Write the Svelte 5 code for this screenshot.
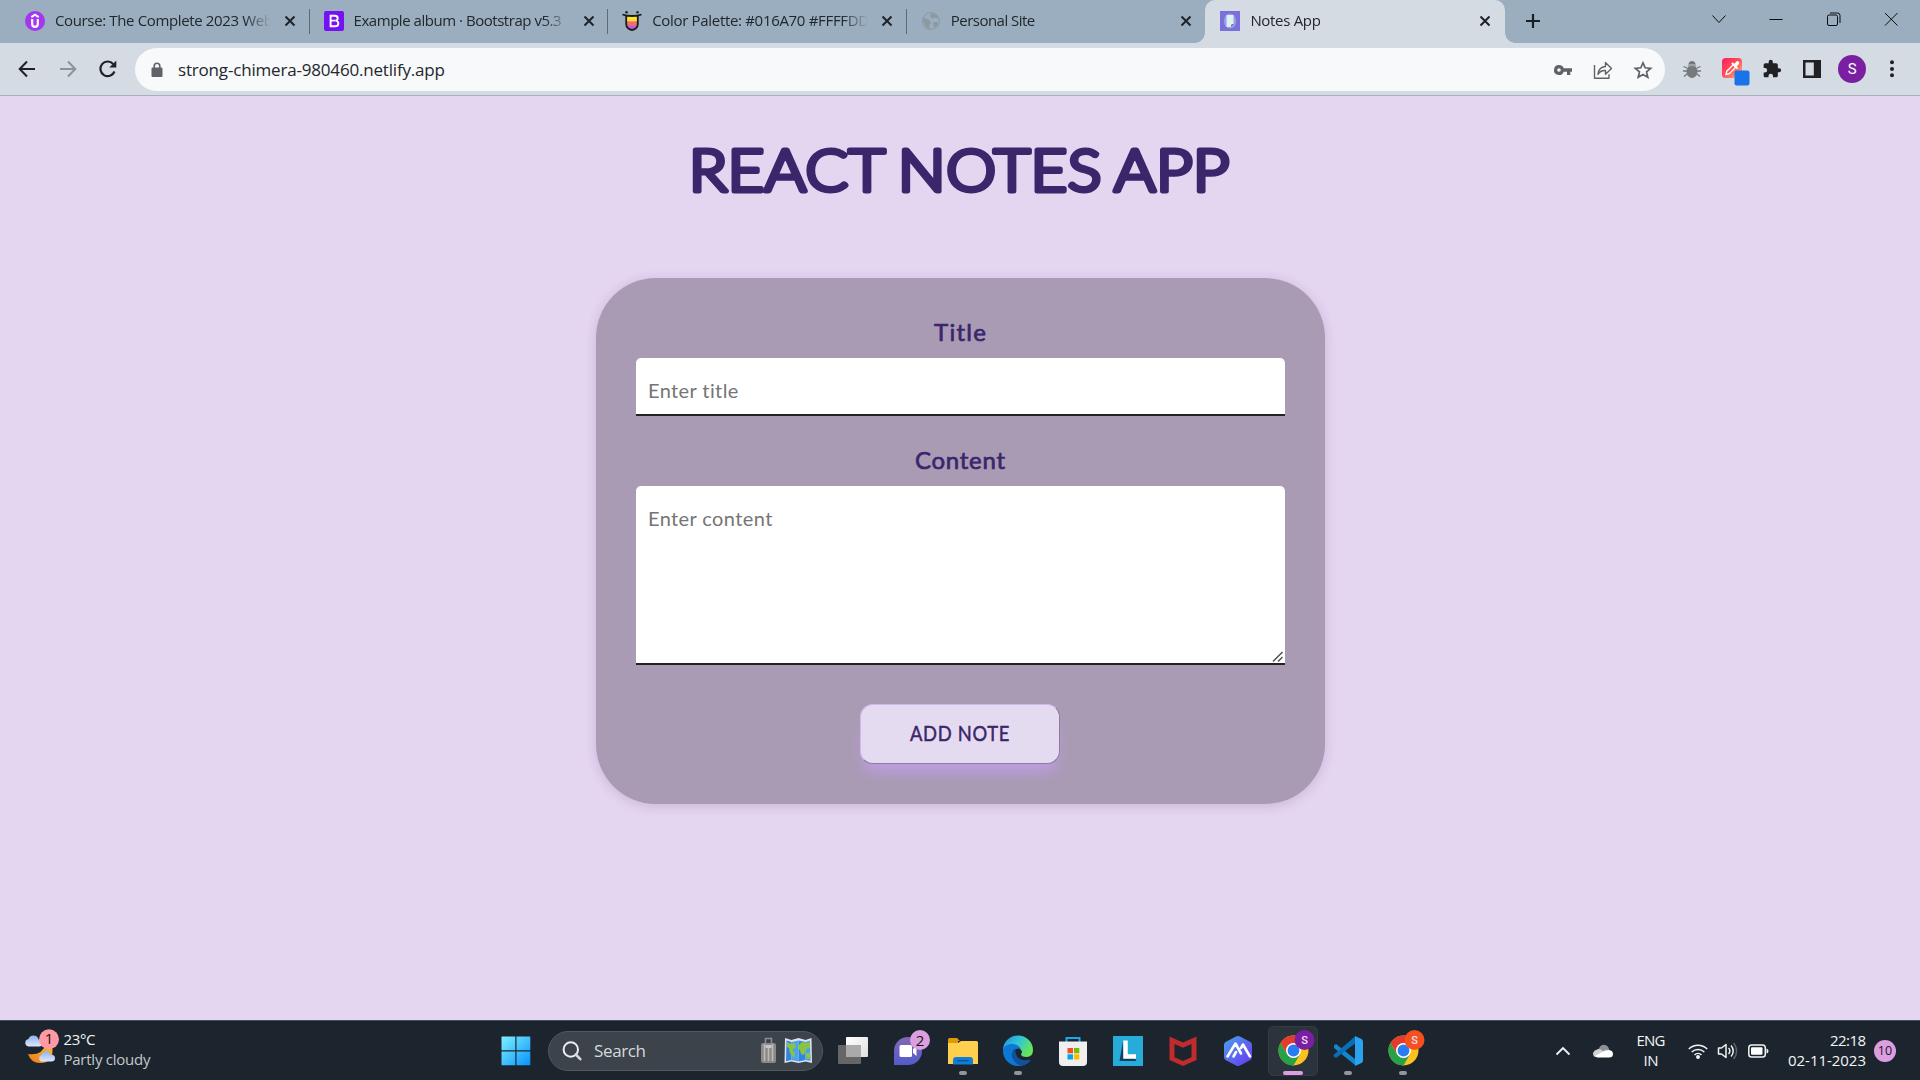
<script>
  const tabs = [
    { icon: 'udemy', title: 'Course: The Complete 2023 Web', width: 218 },
    { icon: 'bootstrap', title: 'Example album · Bootstrap v5.3', width: 208 },
    { icon: 'palette', title: 'Color Palette: #016A70 #FFFFDD', width: 217 },
    { icon: 'globe', title: 'Personal Site', width: 84.5 },
    { icon: 'notes', title: 'Notes App', width: 70.5, active: true },
  ];

  // Tracks the letters so that a label takes the given width.
  function fit(node, width) {
    const gap = (width - node.getBoundingClientRect().width) / (node.textContent.length - 1);
    node.style.letterSpacing = `${gap}px`;
    node.style.marginRight = `${-gap}px`;
  }
</script>

{#snippet chrome(color)}
  <svg class="chrome" width="42" height="42" viewBox="0 0 42 42">
    <circle cx="20.5" cy="20.5" r="15" fill="#fcc31e" />
    <path d="M20.5 13H33.5A15 15 0 0 0 7.5 13L14 24.3Z" fill="#e33b2e" />
    <path d="M7.5 13A15 15 0 0 0 20.5 35.5L27 24.2 20.5 27 14 24.2Z" fill="#27a04a" />
    <circle cx="20.5" cy="20.5" r="7.5" fill="#fff" />
    <circle cx="20.5" cy="20.5" r="5.9" fill="#2b7bf0" />
    <circle cx="31.5" cy="10" r="10" fill={color} />
    <text x="31.5" y="14" text-anchor="middle" class="chrome-letter">S</text>
  </svg>
{/snippet}

<div class="screen">
  <header class="tabstrip">
    {#each tabs as tab, i}
      <div class="tab" class:active={tab.active} class:divided={i < 3}>
        <svg class="favicon" width="20" height="20" viewBox="0 0 20 20">
          {#if tab.icon === 'udemy'}
            <circle cx="10" cy="10" r="10" fill="#a435f0" />
            <path d="M6.3 6.2 10 3.7l3.7 2.5" fill="none" stroke="#fff" stroke-width="2" />
            <path d="M7.2 8v5a2.8 2.8 0 0 0 5.6 0V8" fill="none" stroke="#fff" stroke-width="2.2" />
          {:else if tab.icon === 'bootstrap'}
            <rect width="20" height="20" rx="2" fill="#7512f5" />
            <path d="M6.6 4.7h4.3q2.8 0 2.8 2.5 0 2-2 2.4 2.6.3 2.6 2.8 0 2.9-3.4 2.9H6.6Z" fill="none" stroke="#fff" stroke-width="1.9" />
            <path d="M6.6 9.6h5" stroke="#fff" stroke-width="1.7" />
          {:else if tab.icon === 'palette'}
            <path d="M4.5 5.5h11v5h-11z" fill="#ffe32b" />
            <path d="M4.5 10.5h11v4h-11z" fill="#ff6a5e" />
            <path d="M5 14.5h10q-1 4-5 4t-5-4" fill="#c05bd8" />
            <path d="M.5 3.5Q4 5 10 5t9.5-1.5M4.2 5v8a5.8 6 0 0 0 11.6 0V5" fill="none" stroke="#1b1b1b" stroke-width="1.8" />
            <circle cx="4.5" cy="1.3" r="1.2" fill="#1b1b1b" /><circle cx="15.5" cy="1.3" r="1.2" fill="#1b1b1b" />
          {:else if tab.icon === 'globe'}
            <circle cx="10" cy="10" r="8.5" fill="none" stroke="#8e989f" stroke-width="1" />
            <path d="M2 7q5 0 7 3t-1 4l1 4Q2 16 2 7M10 2.5q-2 4 1 5l3-1 3.5 1Q16 2.5 10 2.5M12 11l4 0 1.500 1.500Q16 16 13 17Z" fill="#8e989f" />
          {:else}
            <rect width="20" height="20" fill="#7b6fdb" />
            <ellipse cx="10" cy="10" rx="6.200" ry="7.500" fill="#9a9be6" />
            <path d="M6.500 4h7v9l-2.500 3H6.500Z" fill="#dcf1f0" />
            <path d="m11 16 .5-2.500 2-.5Z" fill="#3b3191" />
          {/if}
        </svg>
        <span class="tab-title"><span class="run" use:fit={tab.width}>{tab.title}</span></span>
        <svg class="close" width="12" height="12" viewBox="0 0 12 12"><path d="m1.500 1.500 9 9m0-9-9 9" stroke="#1f2328" stroke-width="2" /></svg>
      </div>
    {/each}
    <div class="new-tab">
      <svg width="16" height="16" viewBox="0 0 16 16"><path d="M8 1v14M1 8h14" stroke="#1b1e22" stroke-width="2.200" /></svg>
    </div>
    <div class="window-buttons">
      <svg width="16" height="16" viewBox="0 0 16 16"><path d="m1.500 4.500 6.500 7 6.500-7" /></svg>
      <svg width="16" height="16" viewBox="0 0 16 16"><path d="M1.500 8.500h13" /></svg>
      <svg width="16" height="16" viewBox="0 0 16 16"><rect x="1.500" y="4" width="10" height="10.500" rx="1.500" /><path d="M4 2h7.500Q14 2 14 4.500V12" /></svg>
      <svg width="16" height="16" viewBox="0 0 16 16"><path d="m2 2 12.500 12.500m0-12.500L2 14.500" /></svg>
    </div>
  </header>

  <nav class="toolbar">
    <div class="nav-buttons">
      <svg width="20" height="20" viewBox="0 0 20 20"><path d="M18 10H3M10 2.500 2.700 10l7.300 7.500" fill="none" stroke="#202124" stroke-width="2" /></svg>
      <svg width="20" height="20" viewBox="0 0 20 20"><path d="M2 10h15M10 2.500l7.300 7.500-7.300 7.500" fill="none" stroke="#8c9299" stroke-width="2" /></svg>
      <svg width="20" height="20" viewBox="0 0 20 20"><path d="M16.500 12.500A7.300 7.300 0 1 1 15.200 5" fill="none" stroke="#202124" stroke-width="2.200" /><path d="M18.300 1.500v7h-7Z" fill="#202124" /></svg>
    </div>
    <div class="omnibox">
      <svg class="lock" width="12" height="16" viewBox="0 0 12 16"><rect x=".5" y="5.500" width="11" height="9.500" rx="1.300" fill="#5f6368" /><path d="M3.200 6V4a2.800 2.800 0 0 1 5.600 0v2" fill="none" stroke="#5f6368" stroke-width="1.600" /></svg>
      <span class="url"><span class="run" use:fit={267}>strong-chimera-980460.netlify.app</span></span>
      <div class="omni-icons">
        <svg width="20" height="20" viewBox="0 0 20 20"><path d="M6 5a5 5 0 1 0 4.700 6.700H14V15h3.300v-3.300H19V8.300h-8.300A5 5 0 0 0 6 5m0 3.200a1.800 1.800 0 1 1 0 3.600 1.800 1.800 0 0 1 0-3.600" fill="#5f6368" /></svg>
        <svg width="20" height="20" viewBox="0 0 20 20"><path d="M1.500 5v13.200H16v-4M5 14.500Q5.500 7 12.500 6.500V2.500l6 6-6 5.700v-3.700Q7.500 10 5 14.500Z" fill="none" stroke="#5f6368" stroke-width="1.400" stroke-linejoin="round" /></svg>
        <svg width="20" height="20" viewBox="0 0 20 20"><path d="m10 2.800 2.200 5 5.500.5-4.200 3.600 1.300 5.400L10 14.400l-4.800 2.900 1.300-5.400-4.200-3.600 5.500-.5Z" fill="none" stroke="#5f6368" stroke-width="1.700" /></svg>
      </div>
    </div>
    <div class="extensions">
      <svg width="20" height="20" viewBox="0 0 20 20">
        <path d="M5 9 1.500 7.500M5 12H1m4 3-3 2.500M15 9l3.500-1.500M15 12h4m-4 3 3 2.500" stroke="#777" stroke-width="1.300" />
        <ellipse cx="10" cy="12.500" rx="5.600" ry="6.500" fill="#777a7c" /><path d="M5.500 7.200a4.700 5.500 0 0 1 9 0Z" fill="#a0a3a5" /><path d="M6.500 5a3.600 4 0 0 1 7 0Z" fill="#777" />
      </svg>
      <svg width="30" height="30" viewBox="0 0 30 30">
        <defs><linearGradient id="pick" x1="0" y1="0" x2="1" y2="1"><stop offset="0" stop-color="#fb1f62" /><stop offset=".5" stop-color="#ff5058" /><stop offset="1" stop-color="#ffc27a" /></linearGradient></defs>
        <rect x="5" y="4" width="20" height="20" rx="3.500" fill="url(#pick)" />
        <path d="m9 20.500.8-3.300 6.400-6.400 2.500 2.500-6.400 6.400Z" fill="none" stroke="#fff" stroke-width="1.300" />
        <path d="m15.500 9.500 4.500 4.500" stroke="#fff" stroke-width="1.800" stroke-linecap="round" />
        <path d="m18.500 11 2-2" stroke="#fff" stroke-width="3.600" stroke-linecap="round" />
        <rect x="17.500" y="16.500" width="15" height="15" rx="2" fill="#1a73e8" />
      </svg>
      <svg width="20" height="20" viewBox="0 0 24 24"><path d="M20.500 11H19V7a2 2 0 0 0-2-2h-4V3.500a2.500 2.500 0 0 0-5 0V5H4a2 2 0 0 0-2 2v3.800h1.500a2.700 2.700 0 0 1 0 5.400H2V20c0 1.100.9 2 2 2h3.800v-1.500a2.700 2.700 0 0 1 5.400 0V22H17a2 2 0 0 0 2-2v-4h1.500a2.500 2.500 0 0 0 0-5" fill="#202124" /></svg>
      <svg width="20" height="20" viewBox="0 0 20 20"><path d="M1 1h18v18H1Z" fill="#202124" /><path d="M3.500 3.500h8.300v13H3.500Z" fill="#d4dbe3" /></svg>
      <span class="avatar">S</span>
      <svg width="20" height="20" viewBox="0 0 20 20" fill="#202124"><circle cx="10" cy="3.300" r="2" /><circle cx="10" cy="10" r="2" /><circle cx="10" cy="16.300" r="2" /></svg>
    </div>
  </nav>

  <main class="page">
    <h1>
      <svg width="540" height="64" viewBox="0 0 540 64"><text x="-1" y="52.500" textLength="541" lengthAdjust="spacingAndGlyphs" class="heading">REACT NOTES APP</text></svg>
    </h1>
    <form class="card">
      <label for="title"><span class="run" use:fit={52}>Title</span></label>
      <input id="title" placeholder="Enter title" />
      <label for="content" class="second"><span class="run" use:fit={90}>Content</span></label>
      <div class="area">
        <textarea id="content" placeholder="Enter content"></textarea>
        <svg class="grip" width="12" height="12" viewBox="0 0 12 12"><path d="M1 10.500 10.500 1M6 10.500 10.500 6" stroke="#4a4a4a" stroke-width="1.400" /></svg>
      </div>
      <button type="button">
        <svg width="101" height="30" viewBox="0 0 101 30"><text x="1" y="22.300" textLength="100" lengthAdjust="spacingAndGlyphs" class="add">ADD NOTE</text></svg>
      </button>
    </form>
  </main>

  <footer class="taskbar">
    <div class="weather">
      <svg width="36" height="38" viewBox="0 0 36 38">
        <defs>
          <linearGradient id="cloud" x1="0" y1="0" x2="0" y2="1"><stop offset="0" stop-color="#8fb2ee" /><stop offset="1" stop-color="#dbe8fb" /></linearGradient>
          <linearGradient id="moon" x1="1" y1="0" x2="0" y2="1"><stop offset="0" stop-color="#f9bd2d" /><stop offset="1" stop-color="#ee7a1c" /></linearGradient>
        </defs>
        <path d="M29 18q3 17-12 17-9 0-12-9 14 2 18-10Z" fill="url(#moon)" />
        <path d="M5.500 18.500a3.800 3.800 0 0 1 0-7.500Q6.500 7.500 10.500 7.500q4 0 5 4 4 0 4 3.500t-3.500 3.500Z" fill="url(#cloud)" />
        <path d="M18 33.500a3.500 3.500 0 0 1 .5-6.500q1.500-4 4.500-4t4.500 3.500q4.500 0 4.500 3.500t-3.500 3.500Z" fill="url(#cloud)" />
        <circle cx="26" cy="11.200" r="10" fill="#ff99a4" />
        <text x="26" y="16.200" text-anchor="middle" class="badge-text">1</text>
      </svg>
      <div class="lines">
        <span><span class="run" use:fit={32}>23°C</span></span>
        <span class="dim"><span class="run" use:fit={87}>Partly cloudy</span></span>
      </div>
    </div>

    <div class="apps">
      <div class="cell">
        <svg class="start" width="30" height="30" viewBox="0 0 30 30">
          <defs><linearGradient id="win" gradientUnits="userSpaceOnUse" x1="0" y1="0" x2="29" y2="29"><stop offset="0" stop-color="#7ff3ff" /><stop offset="1" stop-color="#0a93fb" /></linearGradient></defs>
          <path d="M1 .5h13.300v13.800H.5V1ZM15.500.5h13.300l.5.5v13.300H15.500ZM.5 15.500h13.800v13.800H1l-.5-.5ZM15.500 15.500h13.800v13.300l-.5.500H15.500Z" fill="url(#win)" />
        </svg>
      </div>
      <div class="search">
        <svg width="20" height="20" viewBox="0 0 20 20"><circle cx="8.800" cy="8.500" r="7.200" fill="none" stroke="#eceef0" stroke-width="2" /><path d="m13.800 13.500 4.500 4.700" stroke="#d5d7da" stroke-width="2.600" stroke-linecap="round" /></svg>
        <span class="search-text"><span class="run" use:fit={52}>Search</span></span>
        <svg width="52" height="28" viewBox="0 0 52 28">
          <path d="M5.500 7V1.500h6V7" fill="none" stroke="#858b9b" stroke-width="1.600" />
          <rect x="1" y="6" width="15" height="20" rx="2" fill="#8b8987" />
          <path d="M4.500 7v17M8.500 10v14M12.500 7v17" stroke="#bdbbb8" stroke-width="1.600" />
          <path d="M5.500 8h6v3h-6Z" fill="#c9c6cb" />
          <path d="m25 1 6.500 2 7-2 7 2 6-2 .5 25-6.500-1.500-7 1.500-7-1.500-7 1.500Z" fill="#e4e1ee" />
          <path d="m26.500 3.500 5 1.500v18l-5.500 1.200ZM38.500 3.500l7 1.500v18l-7 1.500Z" fill="#2e86e0" />
          <path d="m31.500 5 7-1.500v21l-7-1.500ZM45.500 5l4.500-1.500.5 20.500-5-1Z" fill="#4ba3ec" />
          <path d="m27 5 4 2 4-1 1 4-4 3 3 3-1 5-4-5-1-5-2-1ZM38 9l4-4 5 1 3-1v6l-4 1-2 6-3-1-1-4-2-1ZM46 16h4l.5 5-4 1Z" fill="#8bc53f" />
        </svg>
      </div>
      <div class="cell">
        <svg width="32" height="30" viewBox="0 0 32 30">
          <defs><linearGradient id="sheet" x1="0" y1="0" x2="1" y2="1"><stop offset="0" stop-color="#fff" /><stop offset="1" stop-color="#dedede" /></linearGradient></defs>
          <rect x="9" y="1" width="22" height="20" rx="1" fill="url(#sheet)" /><rect x="1" y="9" width="23" height="19" rx="1" fill="#666" /><path d="M9 9h15v12H9Z" fill="#aaa" />
        </svg>
      </div>
      <div class="cell">
        <svg class="raised" width="38" height="38" viewBox="0 0 38 38">
          <defs><linearGradient id="chat" x1="0" y1="0" x2="0" y2="1"><stop offset="0" stop-color="#8565b5" /><stop offset="1" stop-color="#525ccd" /></linearGradient></defs>
          <path d="M3 36V22A14 14 0 1 1 17 36Z" fill="url(#chat)" />
          <rect x="8.500" y="16" width="12.500" height="12" rx="1.500" fill="#fff" /><path d="m22 20 3.500-3v10L22 24Z" fill="#fff" />
          <circle cx="29" cy="11" r="10" fill="#db9fe0" />
          <text x="29" y="16.500" text-anchor="middle" class="badge-text">2</text>
        </svg>
      </div>
      <div class="cell running">
        <svg width="32" height="30" viewBox="0 0 32 30">
          <path d="M1 3.500q0-1.500 1.500-1.500H10l3 3h-2v6H1Z" fill="#dd9b0a" /><path d="M1 7h10l3-2h15.500q1.500 0 1.500 1.500V28H1Z" fill="#ffcf4d" />
          <path d="M6 28.500V24q0-3 3-3h14q3 0 3 3v4.500Z" fill="#117fd5" /><path d="M10 24.700h12" stroke="#07569c" stroke-width="1.500" />
        </svg>
      </div>
      <div class="cell running">
        <svg width="30" height="30" viewBox="0 0 30 30">
          <defs><linearGradient id="wave" x1="0" y1="0" x2="1" y2=".5"><stop offset="0" stop-color="#1b8fdc" /><stop offset=".5" stop-color="#31c2dc" /><stop offset="1" stop-color="#65e65a" /></linearGradient></defs>
          <path d="M0 14A15 14.500 0 0 1 30 14q0 7-6.500 7-5.500 0-5.500-3 2-2 0-4-3-5-9-4.500Q3 10 0 14" fill="url(#wave)" />
          <path d="M0 14q1-5 8-6 7-.5 10 5-5-2-7 3-2 9 6 11 5 1 11-3-5 6-13 6A15 15 0 0 1 0 14" fill="#0c78d4" />
          <path d="M12 12q-6 6-1.500 12 3 5 8 5.500 6-1 9-6-15 4-15.500-11.500" fill="#11509c" />
        </svg>
      </div>
      <div class="cell">
        <svg width="30" height="30" viewBox="0 0 30 30">
          <path d="M8.500 7V2h13v5" fill="none" stroke="#18a9ea" stroke-width="2" /><path d="M1 5.500h28V26q0 4-4 4H5q-4 0-4-4Z" fill="#efefef" />
          <path d="M9.500 12H15v5.300H9.500Z" fill="#f25022" /><path d="M16 12h5.300v5.300H16Z" fill="#7fba00" /><path d="M9.500 18.300H15v5.200H9.500Z" fill="#00a4ef" /><path d="M16 18.300h5.300v5.200H16Z" fill="#ffb900" />
        </svg>
      </div>
      <div class="cell">
        <svg width="30" height="30" viewBox="0 0 30 30"><path d="M0 0h30v30H0Z" fill="#27acd9" /><path d="m10 5-3.500 20h17l-1.500-3H11Z" fill="#123f66" /><path d="M12.500 4.500v16H23" fill="none" stroke="#fff" stroke-width="4.500" /></svg>
      </div>
      <div class="cell">
        <svg width="28" height="30" viewBox="0 0 28 30"><path fill-rule="evenodd" d="m.5.500 13.500 6 13.500-6V24L14 30 .5 24ZM5.500 8v13.300L14 25l8.500-3.700V8L14 11.800Z" fill="#c02b2b" /></svg>
      </div>
      <div class="cell">
        <svg width="28" height="30" viewBox="0 0 28 30">
          <defs><linearGradient id="hex" x1="0" y1="0" x2="1" y2="1"><stop offset="0" stop-color="#4aa3ec" /><stop offset="1" stop-color="#6a34f0" /></linearGradient></defs>
          <path d="M12 .6q2-1 4 0l10 5.200q2 1 2 3v12.400q0 2-2 3l-10 5.200q-2 1-4 0L2 24.200q-2-1-2-3V8.800q0-2 2-3Z" fill="url(#hex)" />
          <path d="M3.500 20.500 11.500 7.500 17 17.500M9.500 20.500l2.500-4.500M17 12l2-3.500L26 20.500" fill="none" stroke="#fff" stroke-width="2.600" stroke-linecap="round" stroke-linejoin="round" />
        </svg>
      </div>
      <div class="cell running current">{@render chrome('#7b1fa2')}</div>
      <div class="cell running">
        <svg width="30" height="30" viewBox="0 0 30 30"><path d="m1 9.500 2-1.500 19 15v6L1 12Z" fill="#1585cf" /><path d="M22 .5v7L3 22l-2-1.500q-1-1 0-2Z" fill="#0a6eb5" /><path d="m22 0 6.500 3q1.500 1 1.500 2.500v19q0 1.500-1.500 2.500L22 30Z" fill="#2ba2ee" /></svg>
      </div>
      <div class="cell running">{@render chrome('#f4511e')}</div>
    </div>

    <div class="tray">
      <svg width="16" height="10" viewBox="0 0 16 10"><path d="m1.500 8.500 6.500-6.500 6.500 6.500" fill="none" stroke="#f2f3f4" stroke-width="1.800" /></svg>
      <svg width="22" height="14" viewBox="0 0 22 14"><path d="M4 9Q5 5 7 4.500 9 0 13 1q3 .5 4 4l1 5Z" fill="#8d9297" /><path d="M1 9q1-3 4-3.500l3-.5 7 5-3 3H4Q1 13 1 9" fill="#cfd2d4" /><path d="m3 12 10-5.500 4-.5q4 .5 4 4t-4 3.500H5Z" fill="#fff" /></svg>
      <div class="lines centered"><span><span class="run" use:fit={29}>ENG</span></span><span><span class="run" use:fit={15}>IN</span></span></div>
      <svg width="20" height="16" viewBox="0 0 20 16" fill="none" stroke="#f2f3f4" stroke-width="1.500"><path d="M.8 6a13 13 0 0 1 18.400 0M3.700 9a9 9 0 0 1 12.600 0M6.500 12a5 5 0 0 1 7 0" /><circle cx="10" cy="14" r="1.200" fill="#f2f3f4" /></svg>
      <svg class="volume" width="22" height="18" viewBox="0 0 22 18" fill="none" stroke="#f2f3f4" stroke-width="1.500"><path d="M1.500 6h3L9 2.500v13L4.500 12h-3Z" stroke-linejoin="round" /><path d="M11.500 6a4 4 0 0 1 0 6M14 3.500a8 8 0 0 1 0 11" /><path d="M16.500 1a12 12 0 0 1 0 16" stroke="#59626a" /></svg>
      <svg width="22" height="14" viewBox="0 0 22 14"><rect x="1.800" y="1" width="16.500" height="12" rx="2.800" fill="none" stroke="#f2f3f4" stroke-width="1.500" /><rect x="4" y="3.200" width="11.500" height="7.600" rx="1" fill="#fff" /><path d="M19.500 4.500q2 .5 2 2.500t-2 2.500Z" fill="#f2f3f4" /></svg>
      <div class="lines right"><span><span class="run" use:fit={36}>22:18</span></span><span><span class="run" use:fit={78}>02-11-2023</span></span></div>
      <span class="count">10</span>
    </div>
  </footer>
</div>

<style>
  :global(body) { margin: 0; }
  .screen { display: flex; flex-direction: column; width: 1920px; height: 1080px; overflow: hidden; background: #e4d5f1; font-family: 'Open Sans', 'Noto Sans', sans-serif; }
  svg { display: block; flex: none; overflow: visible; }
  .run { display: inline-block; white-space: nowrap; }

  .tabstrip { display: flex; height: 43px; padding-left: 11px; background: #9aaebf; flex: none; }
  .tab { display: flex; align-items: center; width: 298.600px; height: 43px; padding: 0 14px 1px; box-sizing: border-box; position: relative; flex: none; }
  .divided::after { content: ''; position: absolute; right: 0; top: 9px; width: 1px; height: 25px; background: #5c6b78; }
  .active { background: #d4dbe3; border-radius: 10px 10px 0 0; width: 300px; padding-left: 15px; }
  .active::before, .active::after { content: ''; position: absolute; bottom: 0; width: 10px; height: 10px; }
  .active::before { left: -10px; background: radial-gradient(circle at 0 0, transparent 9.500px, #d4dbe3 10px); }
  .active::after { right: -10px; background: radial-gradient(circle at 100% 0, transparent 9.500px, #d4dbe3 10px); }
  .tab-title { width: 219px; margin: 0 0 2px 10px; font-size: 15px; line-height: 20px; color: #22272c; white-space: nowrap; mask-image: linear-gradient(90deg, #000 190px, transparent 216px); flex: none; }
  .tab .close { margin-left: 10px; }
  .new-tab { display: flex; align-items: center; padding: 0 0 1px 19.500px; }
  .window-buttons { display: flex; align-items: center; gap: 41.400px; height: 37px; margin-left: auto; padding-right: 21px; fill: none; stroke: #0c0d0e; stroke-width: 1; }

  .toolbar { display: flex; align-items: center; height: 53px; box-sizing: border-box; border-bottom: 1px solid #a9b0bd; background: #d4dbe3; flex: none; }
  .nav-buttons { display: flex; gap: 20.500px; width: 118px; padding-left: 17px; flex: none; }
  .omnibox { display: flex; align-items: center; width: 1530px; height: 43px; border-radius: 22px; background: #f7f9fb; box-sizing: border-box; padding: 1px 3px 0 16px; flex: none; }
  .url { margin: 1px 0 0 15px; font-size: 17px; line-height: 24px; color: #24272b; }
  .omni-icons { display: flex; gap: 20px; margin-left: auto; padding-right: 9.500px; }
  .extensions { display: grid; grid-template-columns: repeat(6, 40px); place-items: center; margin-left: 7.200px; height: 40px; }
  .avatar { width: 28px; height: 28px; border-radius: 50%; background: #7b1fa2; color: #fff; font: 15px/28px Roboto, sans-serif; text-align: center; }

  .page { display: flex; flex-direction: column; align-items: center; height: 924px; flex: none; }
  h1 { margin: 42px 0 0; }
  .heading { font: 300 56.500px Lato, sans-serif; fill: #3a266b; stroke: #3a266b; stroke-width: 5px; stroke-linejoin: round; word-spacing: -3px; letter-spacing: .600px; }
  .card { display: flex; flex-direction: column; align-items: center; width: 729px; height: 526px; margin-top: 76px; padding: 39px 40px; box-sizing: border-box; border-radius: 60px; background: #a99bb4; box-shadow: 0 2px 12px rgba(60, 30, 90, .16); }
  label { margin-top: -1px; font: 400 24px/32px Lato, sans-serif; color: #3a266b; -webkit-text-stroke: .700px #3a266b; }
  .second { margin-top: 28px; }
  input, textarea { display: block; width: 649px; box-sizing: border-box; border: 0; border-bottom: 2px solid #222; border-radius: 5px 5px 0 0; margin: 0; padding: 18px 12.500px 10px; background: #fff; font: 20px/28px Lato, sans-serif; letter-spacing: .400px; outline: 0; }
  input { height: 58px; margin-top: 10px; }
  .area { position: relative; margin-top: 10px; }
  textarea { height: 179px; resize: none; }
  .grip { position: absolute; right: 1px; bottom: 2px; }
  input::placeholder, textarea::placeholder { color: #757575; }
  button { display: flex; align-items: center; justify-content: center; width: 200px; height: 60px; margin: 39px 1px 0 0; padding: 0; border: 1px solid; border-color: #d0b7ef #8e7ba4 #8e7ba4 #d0b7ef; border-radius: 13px; background: #e5dbf0; box-shadow: 0 12px 14px -4px rgba(192, 157, 232, .9); }
  .add { font: 400 22px Lato, sans-serif; fill: #3a266b; stroke: #3a266b; stroke-width: .500px; letter-spacing: .800px; }

  .taskbar { display: grid; grid-template-columns: 489px 1fr auto; align-items: center; flex: 1; background: #1c252e; border-top: 1px solid #474c5a; box-sizing: border-box; color: #f4f5f6; font-size: 15px; }
  .weather { display: flex; align-items: flex-start; gap: 4.500px; padding: 0 0 1px 23px; height: 45px; }
  .lines { display: flex; flex-direction: column; line-height: 20px; padding-bottom: 1px; }
  .weather .lines { padding-top: 1.500px; }
  .dim { color: #c3c8cb; }
  .badge-text { font-size: 15px; fill: #161418; }
  .apps { display: flex; align-items: center; height: 59px; }
  .cell { display: flex; align-items: center; justify-content: center; width: 55px; height: 50px; position: relative; flex: none; }
  .running::after { content: ''; position: absolute; bottom: 1px; width: 8px; height: 4px; border-radius: 2px; background: #93979b; }
  .current { width: 50px; margin: 0 2.500px; border-radius: 6px; background: #2b333c; box-shadow: inset 0 0 0 1px #343b44; }
  .current::after { width: 20px; background: #db9fe0; }
  .start { margin-right: 1px; }
  .raised { position: relative; top: -3px; left: 1.500px; }
  .chrome { position: relative; top: .5px; left: .5px; }
  .chrome-letter { font: 500 11px Roboto, sans-serif; fill: #ecdcf2; }
  .search { display: flex; align-items: center; width: 275px; height: 40px; margin: 0 2.500px 0 4px; padding: 0 10px 0 13px; border: 1px solid #51575f; border-radius: 20px; background: #3c434b; box-sizing: border-box; flex: none; }
  .search-text { flex: 1; margin: 1px 0 0 12px; font-size: 17px; line-height: 24px; color: #d6d9db; }
  .tray { display: grid; grid-template-columns: 40px 40px 56px 38px 20px 42px 87px 38px; place-items: center; padding-right: 16px; }
  .centered { align-items: center; }
  .volume { position: relative; left: 1px; }
  .right { align-items: flex-end; justify-self: end; }
  .count { width: 22px; height: 22px; border-radius: 50%; background: #db9fe0; color: #1c161f; font-size: 12.500px; line-height: 21px; text-align: center; }
</style>
